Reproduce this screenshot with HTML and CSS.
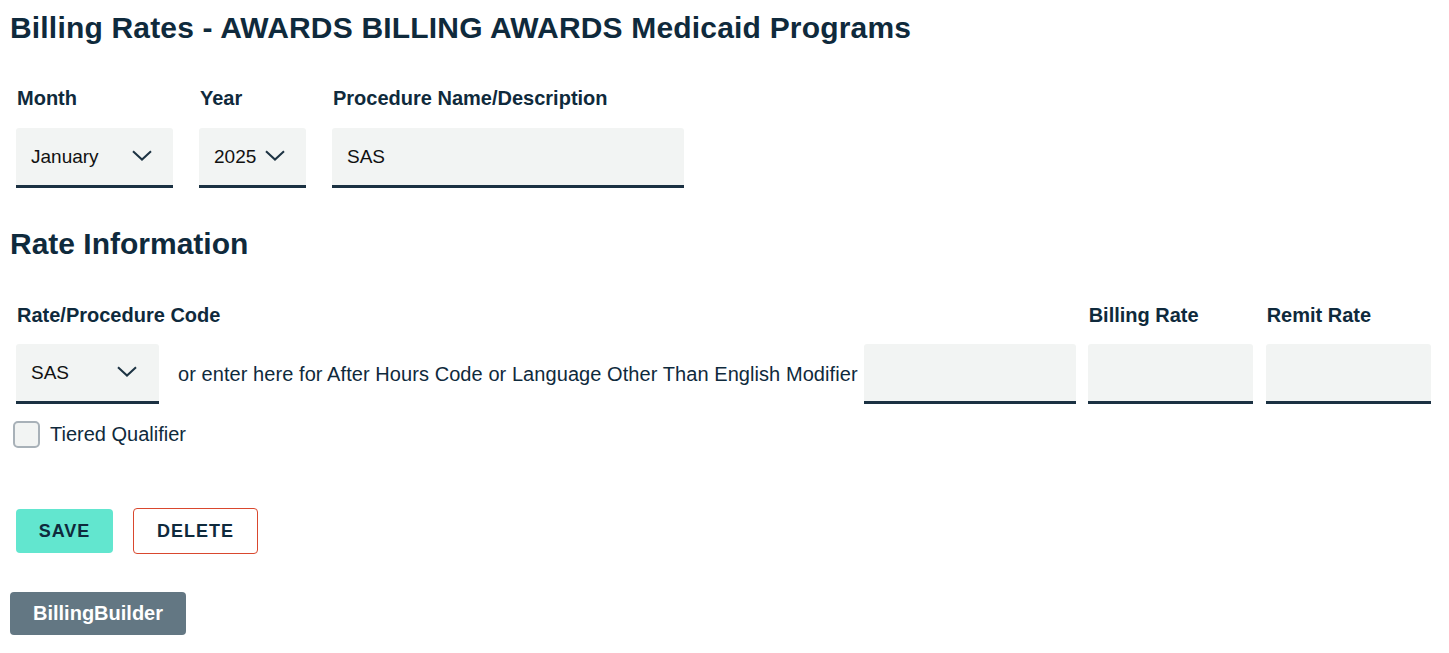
FILE: index.html
```html
<!DOCTYPE html>
<html lang="en">
<head>
<meta charset="utf-8">
<title>Billing Rates</title>
<link rel="stylesheet" href="styles.css">
</head>
<body>
<div class="page">
  <h1 class="title">Billing Rates - AWARDS BILLING AWARDS Medicaid Programs</h1>

  <div class="filters">
    <div class="field">
      <label class="label">Month</label>
      <div class="control select month">
        <span>January</span>
        <svg class="chev" width="20" height="11" viewBox="0 0 20 11"><path d="M1 1.2 L10 9.6 L19 1.2" fill="none" stroke="#1d3343" stroke-width="2"/></svg>
      </div>
    </div>
    <div class="field">
      <label class="label">Year</label>
      <div class="control select year">
        <span>2025</span>
        <svg class="chev" width="20" height="11" viewBox="0 0 20 11"><path d="M1 1.2 L10 9.6 L19 1.2" fill="none" stroke="#1d3343" stroke-width="2"/></svg>
      </div>
    </div>
    <div class="field">
      <label class="label">Procedure Name/Description</label>
      <div class="control text proc"><span>SAS</span></div>
    </div>
  </div>

  <h2 class="section">Rate Information</h2>

  <div class="rates">
    <div class="field">
      <label class="label">Rate/Procedure Code</label>
      <div class="code-row">
        <div class="control select code">
          <span>SAS</span>
          <svg class="chev" width="20" height="11" viewBox="0 0 20 11"><path d="M1 1.2 L10 9.6 L19 1.2" fill="none" stroke="#1d3343" stroke-width="2"/></svg>
        </div>
        <span class="hint">or enter here for After Hours Code or Language Other Than English Modifier</span>
        <div class="control text modifier"></div>
      </div>
    </div>
    <div class="field">
      <label class="label">Billing Rate</label>
      <div class="control text rate"></div>
    </div>
    <div class="field remit">
      <label class="label">Remit Rate</label>
      <div class="control text rate"></div>
    </div>
  </div>

  <div class="check">
    <span class="box"></span>
    <span class="check-label">Tiered Qualifier</span>
  </div>

  <div class="actions">
    <button class="btn save">SAVE</button>
    <button class="btn delete">DELETE</button>
  </div>

  <div class="builder-wrap">
    <button class="builder">BillingBuilder</button>
  </div>
</div>
</body>
</html>
```

FILE: styles.css
```css
* { box-sizing: border-box; }
html, body { margin: 0; padding: 0; background: #fff; }
body {
  font-family: "Liberation Sans", Arial, sans-serif;
  color: #0f2a3c;
}
.page { padding: 0 10px; }

.title {
  margin: 0;
  padding-top: 10px;
  font-size: 30px;
  line-height: 36px;
  font-weight: 700;
  letter-spacing: 0.18px;
  color: #0f2a3c;
}

.filters {
  display: flex;
  gap: 26px;
  margin-top: 40px;
  padding-left: 6px;
}
.field { display: flex; flex-direction: column; }
.label {
  font-size: 20px;
  font-weight: 700;
  line-height: 24px;
  color: #0f2a3c;
  margin-left: 1px;
}
.control {
  margin-top: 18px;
  height: 60px;
  background: #f2f4f3;
  border-bottom: 3px solid #1b3142;
  border-radius: 3px 3px 0 0;
  display: flex;
  align-items: center;
  font-size: 19px;
  color: #111;
}
.select { justify-content: space-between; padding: 0 21px 0 15px; }
.select .chev { margin-top: -2px; }
.month { width: 157px; }
.year { width: 107px; }
.proc { width: 352px; padding-left: 15px; }

.section {
  margin: 38px 0 0;
  font-size: 30px;
  line-height: 36px;
  font-weight: 700;
  color: #0f2a3c;
}

.rates {
  display: flex;
  gap: 12px;
  margin-top: 41px;
  padding-left: 6px;
}
.rates .control { margin-top: 17px; }
.rates .remit { margin-left: 1px; }
.code-row { display: flex; align-items: center; }
.code { width: 143px; padding-right: 22px; }
.hint {
  margin: 17px 6px 0 19px;
  font-size: 20px;
  letter-spacing: 0.07px;
  color: #0f2a3c;
  white-space: nowrap;
}
.modifier { width: 212px; }
.rate { width: 165px; }

.check {
  display: flex;
  align-items: center;
  margin-top: 17px;
  padding-left: 3px;
}
.box {
  width: 27px;
  height: 27px;
  border: 2px solid #a8b1b8;
  border-radius: 5px;
  background: #f2f4f3;
}
.check-label {
  margin-left: 10px;
  font-size: 20px;
  color: #0f2a3c;
}

.actions {
  display: flex;
  align-items: center;
  gap: 20px;
  margin-top: 60px;
  padding-left: 6px;
}
.btn {
  font-family: "Liberation Sans", Arial, sans-serif;
  font-size: 18px;
  font-weight: 700;
  letter-spacing: 1px;
  color: #0f2a3c;
  border-radius: 4px;
  cursor: pointer;
  padding: 0;
}
.save {
  width: 97px;
  height: 44px;
  background: #62e6cf;
  border: none;
}
.delete {
  width: 125px;
  height: 46px;
  background: #fff;
  border: 1px solid #d9482e;
}

.builder-wrap { margin-top: 38px; }
.builder {
  width: 176px;
  height: 43px;
  background: #637783;
  color: #fff;
  border: none;
  border-radius: 4px;
  padding: 0;
  font-family: "Liberation Sans", Arial, sans-serif;
  font-size: 20px;
  font-weight: 700;
}
```
